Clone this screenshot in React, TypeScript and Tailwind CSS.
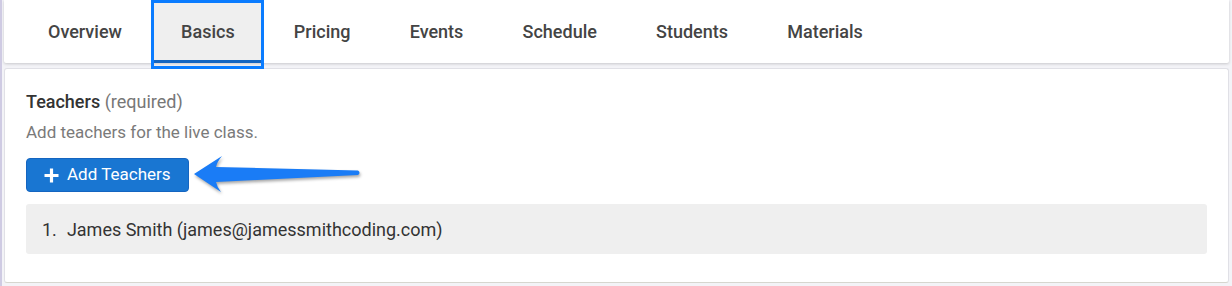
import React from "react";

const tabs = ["Overview", "Basics", "Pricing", "Events", "Schedule", "Students", "Materials"];

function Arrow() {
  return (
    <svg width="175" height="45" viewBox="0 0 175 45" className="ml-[0px] mt-[-6px] shrink-0" style={{ filter: "drop-shadow(1px 2px 1.5px rgba(0,0,0,0.35))" }}>
      <path
        d="M5 22 L33 4 Q28 10 27 15 L169 18.5 Q172 20.5 169 23 L27 30 Q28 35 32 40 Z"
        fill="#1a7cf6"
      />
    </svg>
  );
}

export default function App() {
  return (
    <div
      className="w-[1232px] h-[286px] bg-[#f3f3f7] border-l-2 border-[#cfcbe3] pl-[2px] pr-[3px] overflow-hidden"
      style={{ fontFamily: "Roboto, 'Liberation Sans', sans-serif" }}
    >
      <div className="h-[63px] bg-white shadow-[0_1px_3px_rgba(0,0,0,0.18)] rounded-b-[2px] flex items-start pl-[14.4px] relative z-10">
        {tabs.map((t) => {
          const active = t === "Basics";
          return (
            <div
              key={t}
              className={
                "relative h-[63px] flex items-center px-[29.6px] text-[18px] font-medium text-[#444] " +
                (active ? "bg-[#efefef]" : "")
              }
            >
              <span className="-mt-[1px]">{t}</span>
              {active && (
                <>
                  <span className="absolute left-[3px] right-[3px] bottom-0 h-[3px] bg-[#1565c0]" />
                  <span className="absolute left-0 right-0 top-0 -bottom-[6px] border-[3px] border-[#0a7cff] pointer-events-none" />
                </>
              )}
            </div>
          );
        })}
      </div>
      <div className="mt-[5px] h-[215px] bg-white border border-[#e0e0e6] border-b-[#d6d6cf] rounded-[3px] pl-[21px] pr-[21px] pt-[23px]">
        <div className="text-[18px] leading-[20px] text-[#333] font-medium">
          Teachers <span className="font-normal text-[#777]">(required)</span>
        </div>
        <div className="mt-[10px] text-[17px] leading-[20px] text-[#7a7a7a]">Add teachers for the live class.</div>
        <div className="mt-[16px] h-[34px] flex items-start">
          <button className="h-[34px] w-[163px] shrink-0 flex items-center pl-[17px] bg-[#1976d2] border border-[#1565c0] rounded-[4px] text-white text-[17px]">
            <svg width="15" height="15" viewBox="0 0 15 15" className="mr-[8px]">
              <path d="M7.5 0.5 V14.5 M0.5 7.5 H14.5" stroke="white" strokeWidth="3.2" />
            </svg>
            Add Teachers
          </button>
          <Arrow />
        </div>
        <div className="mt-[12px] h-[50px] bg-[#efefef] rounded-[3px] flex items-center pl-[16px] text-[18px] text-[#333]">
          <span className="mr-[10px]">1.</span>
          <span>James Smith (james@jamessmithcoding.com)</span>
        </div>
      </div>
    </div>
  );
}
